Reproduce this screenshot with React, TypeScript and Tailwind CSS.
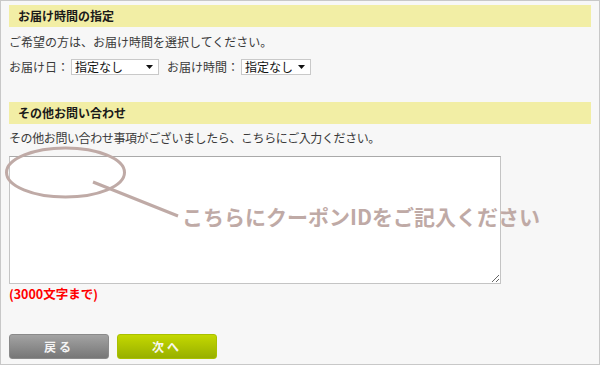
import React from "react";

const font = { fontFamily: '"Noto Sans CJK JP", "Noto Sans", sans-serif' };

function FakeSelect({ width }: { width: string }) {
  return (
    <div
      className={`${width} h-[16px] bg-white border border-[#c9c9c9] flex items-center justify-between pl-[3px] pr-[5px] text-[12px] leading-[14px] text-[#111]`}
    >
      <span>指定なし</span>
      <svg width="7" height="4" viewBox="0 0 7 4">
        <polygon points="0,0 7,0 3.5,4" fill="#111" />
      </svg>
    </div>
  );
}

export default function App() {
  return (
    <div
      className="relative w-[600px] h-[365px] border border-[#c8c8c8] bg-[#f7f7f7] px-[8px] overflow-hidden text-[#3a3a3a]"
      style={font}
    >
      <div className="mt-[4px] h-[22px] bg-[#f2eea5] pl-[9px] text-[12px] font-bold leading-[22px] text-[#1a1a1a]">
        お届け時間の指定
      </div>
      <div className="mt-[7px] text-[12px] leading-[16px]">
        ご希望の方は、お届け時間を選択してください。
      </div>
      <div className="mt-[9px] flex items-center text-[12px] leading-[16px]">
        <span>お届け日：</span>
        <div className="ml-[2px]">
          <FakeSelect width="w-[88px]" />
        </div>
        <span className="ml-[8px]">お届け時間：</span>
        <div className="ml-[2px]">
          <FakeSelect width="w-[70px]" />
        </div>
      </div>
      <div className="mt-[27px] h-[22px] bg-[#f2eea5] pl-[9px] text-[12px] font-bold leading-[22px] text-[#1a1a1a]">
        その他お問い合わせ
      </div>
      <div className="mt-[6px] text-[12px] leading-[16px] tracking-[-0.4px]">
        その他お問い合わせ事項がございましたら、こちらにご入力ください。
      </div>
      <textarea
        className="block mt-[10px] w-[492px] h-[128px] bg-white border border-[#c4c4c4] border-t-[#a9a9a9] outline-none"
        defaultValue=""
      />
      <div className="mt-[3px] text-[12.5px] font-bold leading-[14px] text-[#ff0000]">
        (3000文字まで)
      </div>
      <div className="mt-[33px] flex gap-[8px]">
        <button className="w-[100px] h-[25px] rounded-[3px] bg-gradient-to-b from-[#a3a3a3] to-[#777777] border border-[#8a8a8a] text-[#f4f4f4] text-[12px] font-bold tracking-[3px] leading-[23px]">
          戻る
        </button>
        <button className="w-[100px] h-[25px] rounded-[3px] bg-gradient-to-b from-[#c4d800] to-[#98b000] border border-[#a9c000] text-[#f8f8f0] text-[12px] font-bold tracking-[3px] leading-[23px]">
          次へ
        </button>
      </div>

      <svg
        className="absolute left-[-1px] top-[-1px] pointer-events-none"
        width="600"
        height="365"
        viewBox="0 0 600 365"
      >
        <ellipse cx="65.5" cy="172.5" rx="59" ry="24.5" fill="none" stroke="#bfaaa6" strokeWidth="3" />
        <line x1="93" y1="182" x2="178" y2="216" stroke="#bfaaa6" strokeWidth="3" />
      </svg>
      <div className="absolute left-[181px] top-[201px] text-[21px] font-bold leading-[28px] text-[#bfaaa6] whitespace-nowrap pointer-events-none">
        こちらにクーポンIDをご記入ください
      </div>
    </div>
  );
}
